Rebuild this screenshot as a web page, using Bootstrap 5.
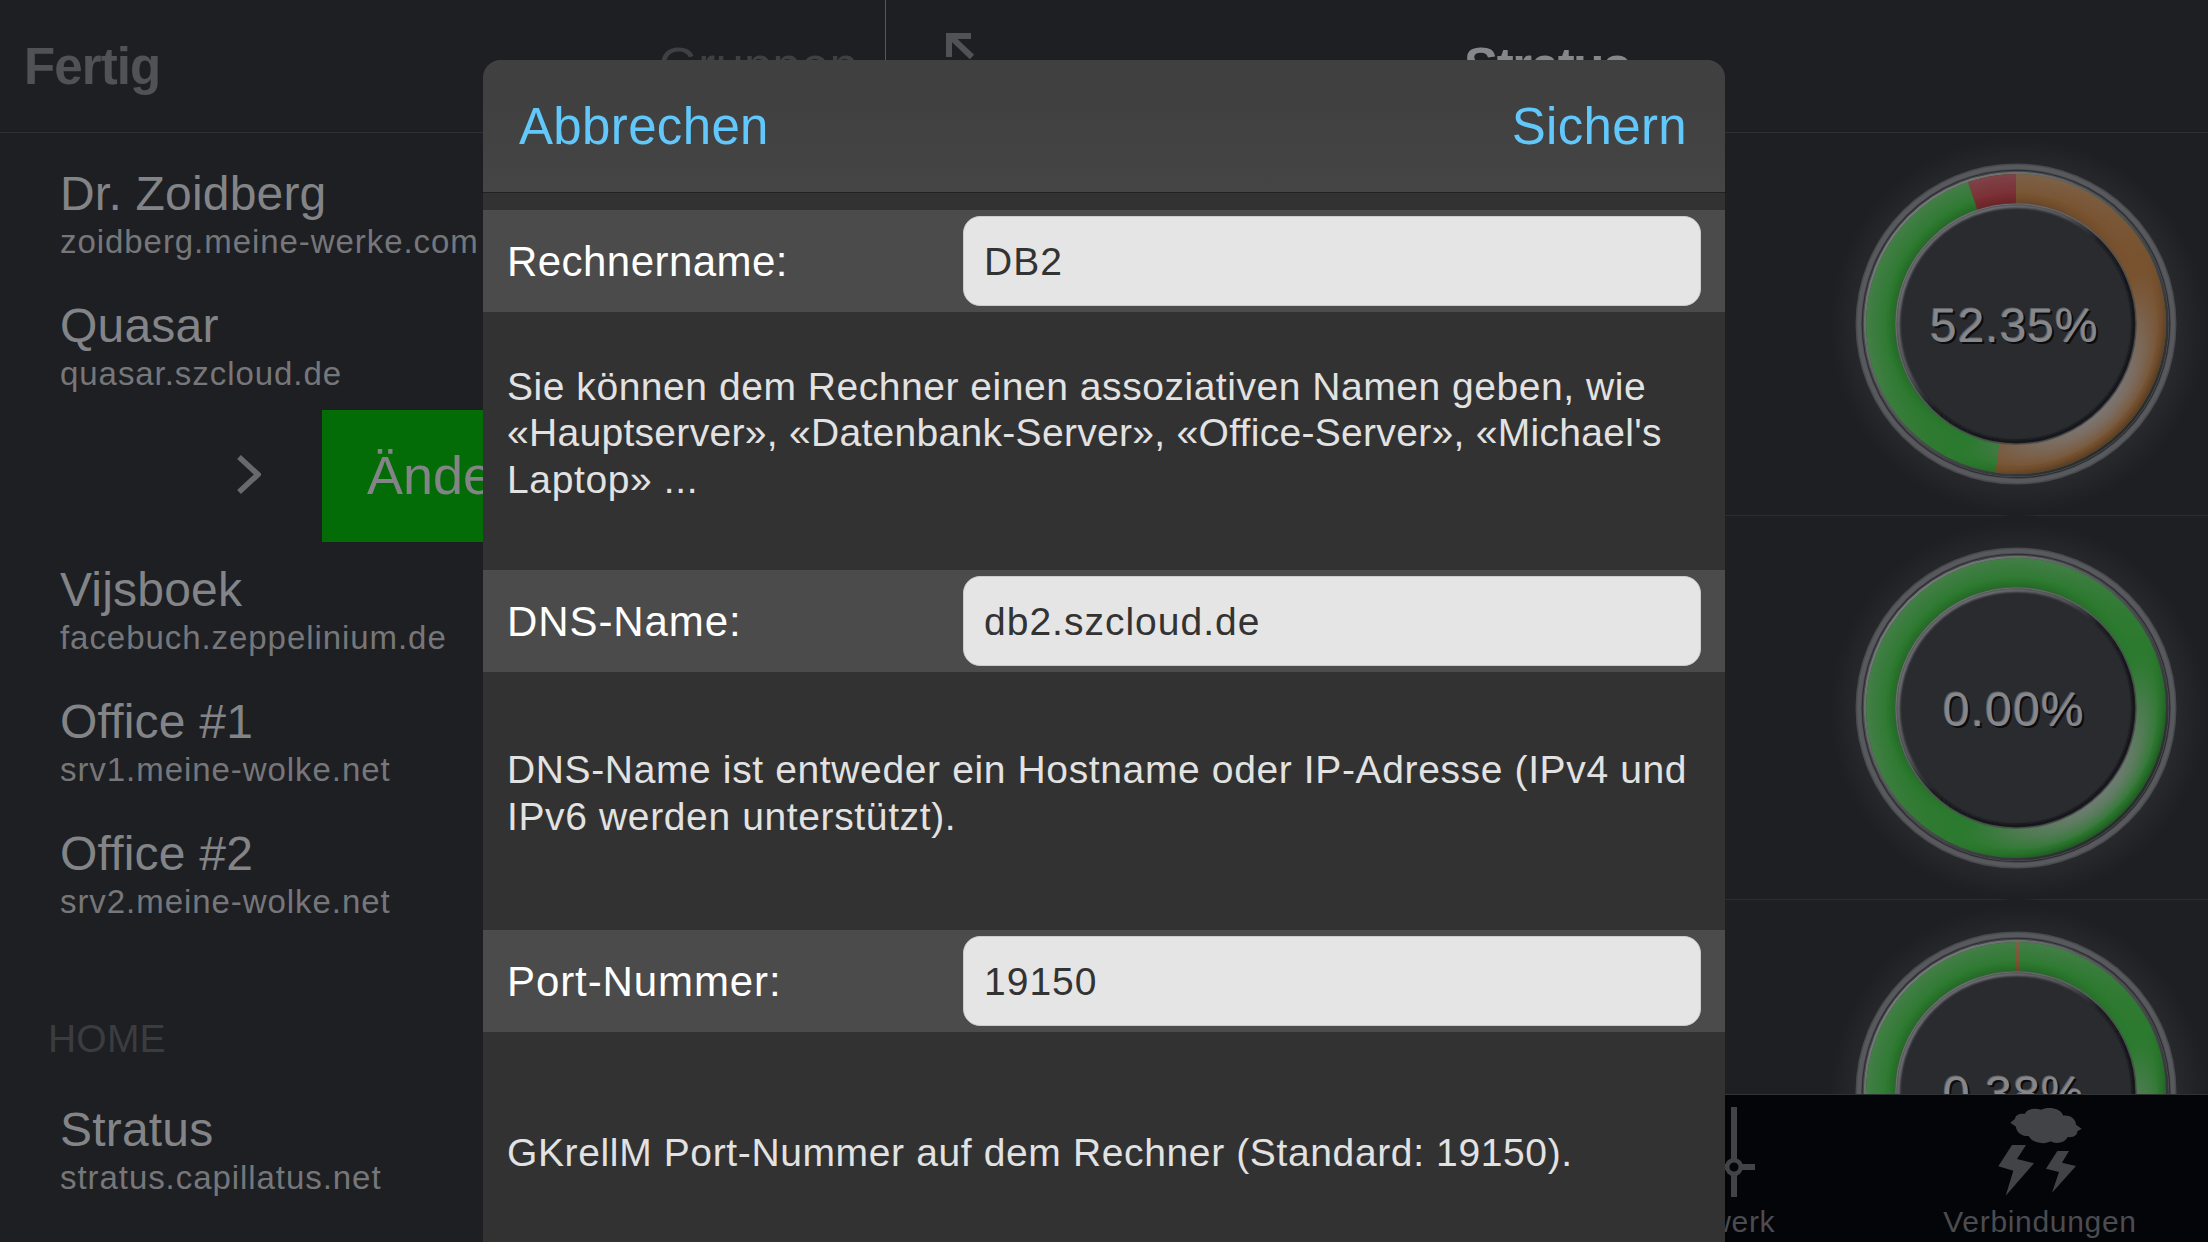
<!DOCTYPE html>
<html lang="de" data-bs-theme="dark">
<head>
<meta charset="utf-8">
<title>Rechner bearbeiten</title>
<link href="https://cdn.jsdelivr.net/npm/bootstrap@5.3.0/dist/css/bootstrap.min.css" rel="stylesheet">
<style>
  body { background: #1e1f23; font-family: "Liberation Sans", Arial, sans-serif; white-space: nowrap; height: 1242px; }
  .app-shell { height: 1242px; }
  .side-pane { width: 886px; border-right: 1px solid #56575b; }
  .side-pane, .main-pane { flex-shrink: 0; }
  .main-pane { width: 1322px; }
  .title-bar { height: 133px; line-height: 134px; font-size: 51px; border-bottom: 1px solid #2f3035; }
  .title-bar.side { padding-left: 24px; padding-right: 27px; color: #515256; }
  .title-bar .lead-title { color: #86878a; letter-spacing: -1.4px; }
  .btn-done { letter-spacing: -.9px; }
  .hdr-muted { color: #3f4044; letter-spacing: .15px; }
  .host-list { padding-top: 13px; }
  .host-row { height: 132px; padding: 24px 0 0 60px; }
  .host-name { font-size: 48px; line-height: 48px; color: #838487; letter-spacing: .2px; margin-bottom: 4px; }
  .host-addr { font-size: 33px; line-height: 40px; color: #76777a; letter-spacing: .94px; }
  .swipe-row { height: 132px; padding-left: 237px; }
  .swipe-edit { margin-left: 61px; width: 250px; height: 132px; line-height: 131px; padding-left: 45px; background: #046c07; color: #838487; font-size: 54px; }
  .group-head { height: 144px; padding: 77px 0 0 48px; font-size: 39px; line-height: 48px; color: #3b3c40; letter-spacing: .2px; }
  .gauge-list { height: 960px; margin-top: -1px; }
  .gauge-cell { height: 384px; flex-shrink: 0; border-bottom: 1px solid #2c2d31; }
  .gauge-cell text { font-size: 48px; fill: #86878b; text-shadow: 2px 1.5px 0 #0b0c0f, -1px -1.5px 0 #626367; }
  .tab-strip { height: 148px; background: #040509; border-top: 1px solid #313236; color: #4b4c50; padding-right: 3px; }
  .tab-cell { width: 330px; font-size: 30px; line-height: 36px; letter-spacing: .68px; padding-top: 12px; }
  .tab-cell span { margin-top: 7px; }
  .sheet { position: absolute; left: 483px; top: 60px; width: 1242px; height: 1182px; border-radius: 18px 18px 0 0; background: #323232; }
  .sheet-head { height: 133px; line-height: 134px; padding: 0 38px 0 36px; font-size: 51px; background: linear-gradient(#404040 30%, #454545); border-bottom: 1px solid #212121; }
  .sheet-head a { color: #62c8fc; letter-spacing: .35px; }
  .sheet-body { padding-top: 17px; }
  .form-line { height: 102px; padding: 0 24px; background: #4b4b4b; }
  .form-line label { font-size: 42px; color: #fff; letter-spacing: .9px; width: 456px; }
  .form-line .label-long { letter-spacing: .45px; }
  .form-line .form-control { flex: 1; height: 90px; border: 1px solid #cbcbcb; border-radius: 17px; background: #e5e5e5; color: #333; font-size: 39px; padding: 2px 20px 0; letter-spacing: 1px; }
  .hint { height: 258px; padding: 0 23px 15px 24px; font-size: 39px; line-height: 46.5px; color: #e2e2e2; letter-spacing: .63px; }
  .hint .tight { letter-spacing: .3px; }
  .hint .snug { letter-spacing: .54px; }
</style>
<script src="https://cdn.jsdelivr.net/npm/bootstrap@5.3.0/dist/js/bootstrap.bundle.min.js"></script>
</head>
<body class="overflow-hidden">

<svg width="0" height="0" class="position-absolute">
  <defs>
    <radialGradient id="halo" gradientUnits="userSpaceOnUse" cx="2" cy="2" r="188">
      <stop offset=".84" stop-color="#28292c"/><stop offset=".92" stop-color="#232428"/><stop offset="1" stop-color="#1e1f23"/>
    </radialGradient>
    <radialGradient id="litBand" gradientUnits="userSpaceOnUse" cx="0" cy="0" r="150">
      <stop offset=".8" stop-color="#7d7d80"/><stop offset=".86" stop-color="#7d7d80" stop-opacity=".7"/><stop offset=".94" stop-color="#7d7d80" stop-opacity=".15"/><stop offset=".96" stop-color="#000" stop-opacity=".06"/><stop offset="1" stop-color="#000" stop-opacity=".28"/>
    </radialGradient>
    <radialGradient id="topBand" gradientUnits="userSpaceOnUse" cx="0" cy="0" r="150">
      <stop offset=".8" stop-color="#000" stop-opacity=".16"/><stop offset=".86" stop-color="#000" stop-opacity="0"/><stop offset=".87" stop-color="#8a8a90" stop-opacity=".05"/><stop offset="1" stop-color="#8a8a90" stop-opacity=".25"/>
    </radialGradient>
    <linearGradient id="fadeLow" gradientUnits="userSpaceOnUse" x1="35" y1="35" x2="95" y2="95">
      <stop offset="0" stop-color="#000"/><stop offset="1" stop-color="#fff"/>
    </linearGradient>
    <linearGradient id="fadeHigh" gradientUnits="userSpaceOnUse" x1="30" y1="30" x2="-50" y2="-50">
      <stop offset="0" stop-color="#000"/><stop offset="1" stop-color="#fff"/>
    </linearGradient>
    <linearGradient id="lip" gradientUnits="userSpaceOnUse" x1="-70" y1="-70" x2="50" y2="50">
      <stop offset="0" stop-color="#77787b"/><stop offset=".35" stop-color="#5c5d61"/><stop offset=".6" stop-color="#15161a"/><stop offset="1" stop-color="#101115"/>
    </linearGradient>
    <linearGradient id="edge" gradientUnits="userSpaceOnUse" x1="-70" y1="-70" x2="50" y2="50">
      <stop offset="0" stop-color="#707174"/><stop offset="1" stop-color="#4a4b4f"/>
    </linearGradient>
    <linearGradient id="thinRing" gradientUnits="userSpaceOnUse" x1="-105" y1="-105" x2="105" y2="105">
      <stop offset="0" stop-color="#77787b"/><stop offset=".5" stop-color="#505155"/><stop offset="1" stop-color="#2a2b2f"/>
    </linearGradient>
    <filter id="soft"><feGaussianBlur stdDeviation="1.3"/></filter>
    <mask id="maskLow" maskUnits="userSpaceOnUse" x="-160" y="-160" width="320" height="320"><rect x="-160" y="-160" width="320" height="320" fill="url(#fadeLow)"/></mask>
    <mask id="maskHigh" maskUnits="userSpaceOnUse" x="-160" y="-160" width="320" height="320"><rect x="-160" y="-160" width="320" height="320" fill="url(#fadeHigh)"/></mask>
    <clipPath id="cell"><rect x="-192" y="-192" width="384" height="384"/></clipPath>

    <g id="bezel">
      <circle r="190" cx="2" cy="2" fill="url(#halo)" clip-path="url(#cell)"/>
      <circle r="160.5" fill="#4a4b4f"/>
      <circle r="157" fill="none" stroke="#58595d" stroke-width="4"/>
      <circle r="154.3" fill="#2b2c30"/>
      <circle r="152.8" fill="none" stroke="#4a4b4f" stroke-width="1"/>
      <circle r="151" fill="none" stroke="url(#thinRing)" stroke-width="2.5"/>
    </g>
    <g id="gloss" fill="none" stroke-width="30">
      <circle r="135" stroke="url(#topBand)" mask="url(#maskHigh)"/>
      <circle r="135" stroke="url(#litBand)" mask="url(#maskLow)"/>
      <circle r="120" fill="#2a2b2f" stroke="none"/>
      <circle r="117.8" stroke="url(#lip)" stroke-width="3" filter="url(#soft)"/>
      <circle r="120" stroke="url(#edge)" stroke-width="1.2"/>
    </g>
  </defs>
</svg>

<div class="app-shell d-flex">
  <aside class="side-pane">
    <div class="title-bar side d-flex justify-content-between">
      <span class="btn-done fw-bold">Fertig</span><span class="hdr-muted">Gruppen</span>
    </div>
    <div class="host-list">
      <div class="host-row"><div class="host-name">Dr. Zoidberg</div><div class="host-addr">zoidberg.meine-werke.com</div></div>
      <div class="host-row"><div class="host-name">Quasar</div><div class="host-addr">quasar.szcloud.de</div></div>
      <div class="swipe-row d-flex align-items-center">
        <svg width="24" height="42" viewBox="0 0 24 42"><path d="M2 2L21 19.500L2 37" fill="none" stroke="#68696c" stroke-width="5.500"/></svg>
        <div class="swipe-edit">Ändern</div>
      </div>
      <div class="host-row"><div class="host-name">Vijsboek</div><div class="host-addr">facebuch.zeppelinium.de</div></div>
      <div class="host-row"><div class="host-name">Office #1</div><div class="host-addr">srv1.meine-wolke.net</div></div>
      <div class="host-row"><div class="host-name">Office #2</div><div class="host-addr">srv2.meine-wolke.net</div></div>
      <div class="group-head">HOME</div>
      <div class="host-row"><div class="host-name">Stratus</div><div class="host-addr">stratus.capillatus.net</div></div>
    </div>
  </aside>

  <main class="main-pane d-flex flex-column">
    <div class="title-bar d-flex">
      <div class="col d-flex align-items-start">
        <svg width="100" height="60" viewBox="-60 0 100 60"><path d="M25 36H3V57M5 37L26 57" fill="none" stroke="#515256" stroke-width="6"/></svg>
      </div>
      <div class="lead-title fw-bold">Stratus</div>
      <div class="col"></div>
    </div>
    <div class="gauge-list overflow-hidden d-flex flex-column flex-fill">
      <div class="gauge-cell d-flex justify-content-end">
        <svg width="384" height="384" viewBox="-192 -192 384 384">
          <use href="#bezel"/>
          <g fill="none" stroke-width="30" transform="rotate(-90)">
            <circle r="135" stroke="#2c7a2f"/>
            <circle r="135" stroke="#795330" pathLength="100" stroke-dasharray="52.2 100"/>
            <circle r="135" stroke="#7a2c31" pathLength="100" stroke-dasharray="5.200 94.8" stroke-dashoffset="-94.8"/>
          </g>
          <use href="#gloss"/>
          <text x="-86" y="18" letter-spacing=".98">52.35%</text>
        </svg>
      </div>
      <div class="gauge-cell d-flex justify-content-end">
        <svg width="384" height="384" viewBox="-192 -192 384 384">
          <use href="#bezel"/>
          <circle r="135" fill="none" stroke="#2c7a2f" stroke-width="30"/>
          <use href="#gloss"/>
          <text x="-73" y="18" letter-spacing="1.15">0.00%</text>
        </svg>
      </div>
      <div class="gauge-cell d-flex justify-content-end">
        <svg width="384" height="384" viewBox="-192 -192 384 384">
          <use href="#bezel"/>
          <circle r="135" fill="none" stroke="#2c7a2f" stroke-width="30"/>
          <path d="M1.500 -150V-120" stroke="#795330" stroke-width="3.500"/>
          <use href="#gloss"/>
          <text x="-73" y="18" letter-spacing="1.15">0.38%</text>
        </svg>
      </div>
    </div>
    <nav class="tab-strip d-flex justify-content-end flex-shrink-0">
      <div class="tab-cell d-flex flex-column align-items-center">
        <svg width="90" height="90" viewBox="0 0 90 90"><g fill="none" stroke="#424347" stroke-width="6"><path d="M69 0V53M69 67V90M76 60H90M62 60H28M21 0V23M21 37V90M28 30H56"/><circle cx="69" cy="60" r="6.800" stroke-width="4.500"/><circle cx="21" cy="30" r="6.800" stroke-width="4.500"/></g></svg>
        <span>Netzwerk</span>
      </div>
      <div class="tab-cell d-flex flex-column align-items-center">
        <svg width="90" height="90" viewBox="45 36 270 270" fill="#424347"><path d="M91 83L105 71C107 60 118 55 134 57C140 42 165 37 183 44C205 35 240 38 250 62C268 60 287 70 288 89L305 101L292 109C292 122 280 128 263 126C256 143 228 149 212 139C195 149 158 146 146 123C125 124 109 112 108 95Z"/><path d="M96 150H138L111 192L162 205L77 302L100 227L55 214ZM232 168H267L246 203L288 213L216 293L237 231L198 221Z"/></svg>
        <span>Verbindungen</span>
      </div>
    </nav>
  </main>
</div>

<section class="sheet overflow-hidden">
  <header class="sheet-head d-flex justify-content-between">
    <a class="text-decoration-none">Abbrechen</a><a class="text-decoration-none">Sichern</a>
  </header>
  <div class="sheet-body">
    <div class="form-line d-flex align-items-center"><label class="label-long" for="f1">Rechnername:</label><input id="f1" class="form-control" value="DB2"></div>
    <div class="hint d-flex align-items-center"><div><span class="snug">Sie können dem Rechner einen assoziativen Namen geben, wie</span><br><span class="tight">«Hauptserver», «Datenbank-Server», «Office-Server», «Michael's</span><br>Laptop» ...</div></div>
    <div class="form-line d-flex align-items-center"><label for="f2">DNS-Name:</label><input id="f2" class="form-control" value="db2.szcloud.de"></div>
    <div class="hint d-flex align-items-center"><div>DNS-Name ist entweder ein Hostname oder IP-Adresse (IPv4 und<br>IPv6 werden unterstützt).</div></div>
    <div class="form-line d-flex align-items-center"><label for="f3">Port-Nummer:</label><input id="f3" class="form-control" value="19150"></div>
    <div class="hint d-flex align-items-center"><div>GKrellM Port-Nummer auf dem Rechner (Standard: 19150).</div></div>
  </div>
</section>
</body>
</html>
